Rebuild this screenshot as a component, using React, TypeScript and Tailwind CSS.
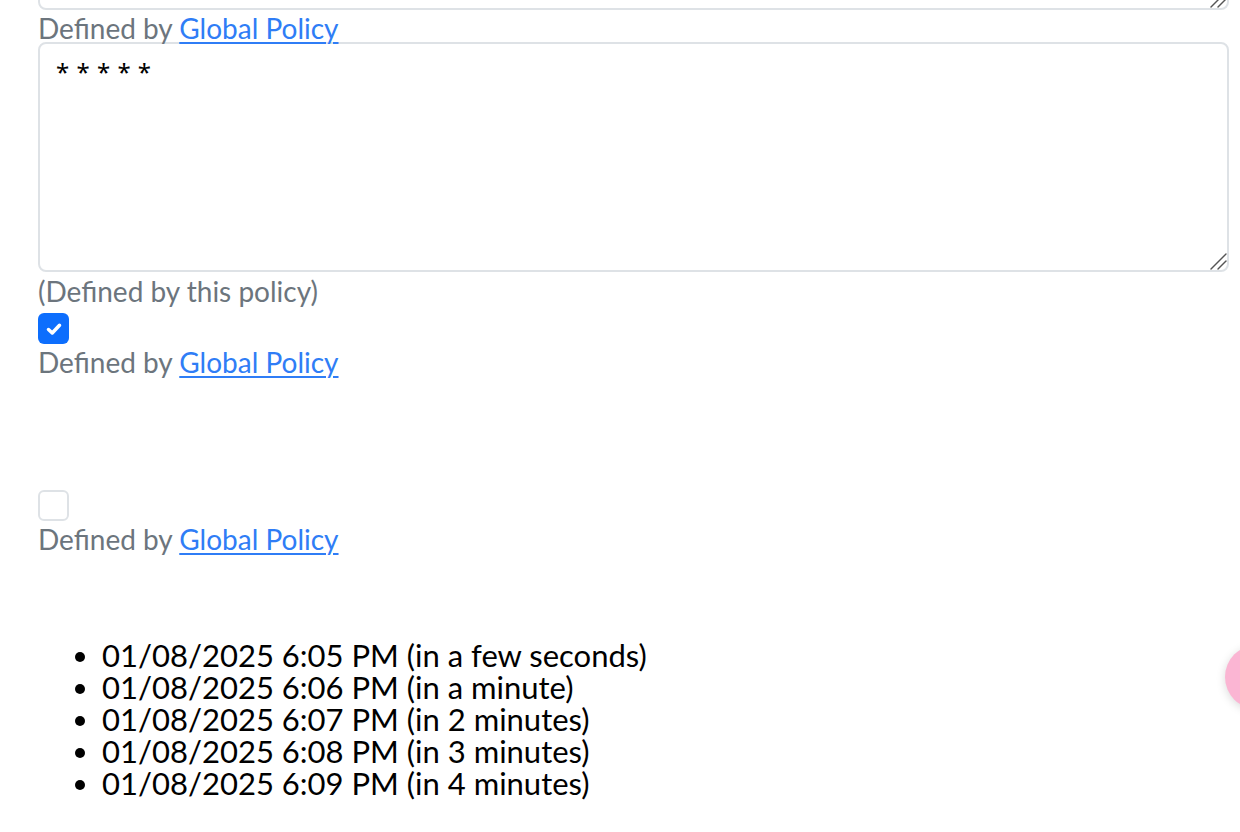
import React from "react";

const font = { fontFamily: "Lato, 'Noto Sans', sans-serif" };

function Defined() {
  return (
    <div className="text-[28px] leading-[32px] text-[#6c757d]">
      Defined by{" "}
      <a href="#" className="text-[#2f7df6] underline underline-offset-[3px] decoration-[2px]">
        Global Policy
      </a>
    </div>
  );
}

function Handle() {
  return (
    <svg className="absolute right-[2px] bottom-[2px] pointer-events-none" width="18" height="18" viewBox="0 0 18 18">
      <path d="M2 17 L17 2" stroke="#555" strokeWidth="1.4" strokeLinecap="round" />
      <path d="M9 17 L17 9" stroke="#555" strokeWidth="1.4" strokeLinecap="round" />
    </svg>
  );
}

export default function App() {
  return (
    <div className="relative w-[1240px] h-[832px] overflow-hidden bg-white" style={font}>
      <div className="pl-[38px] pr-[11px] flex flex-col">
        <div className="relative mt-[-110px]">
          <textarea
            readOnly
            className="block w-full h-[120px] rounded-[8px] border-2 border-[#dee2e6] bg-white outline-none resize-none"
            style={font}
          />
          <Handle />
        </div>
        <div className="relative z-10 mt-[2px] h-[30px]">
          <Defined />
        </div>
        <div className="relative">
          <textarea
            readOnly
            value={"* * * * *"}
            className="block w-full h-[230px] rounded-[8px] border-2 border-[#dee2e6] bg-white px-[16px] py-[12px] text-[24px] leading-[32px] tracking-[0.5px] text-black outline-none resize-none"
            style={{ fontFamily: "'Noto Sans', sans-serif" }}
          />
          <Handle />
        </div>
        <div className="mt-[3px] text-[28px] leading-[32px] text-[#6c757d]">(Defined by this policy)</div>
        <div className="mt-[6px] w-[31px] h-[31px] rounded-[6px] bg-[#0d6efd] flex items-center justify-center">
          <svg width="20" height="20" viewBox="0 0 16 16">
            <path d="M3.6 8.4 L6.6 11.2 L12.4 5" fill="none" stroke="white" strokeWidth="2.8" strokeLinecap="round" strokeLinejoin="round" />
          </svg>
        </div>
        <div className="mt-[2px]">
          <Defined />
        </div>
        <div className="mt-[112px] w-[31px] h-[31px] rounded-[6px] border-2 border-[#dee2e6] bg-white" />
        <div className="mt-[2px]">
          <Defined />
        </div>
        <ul className="mt-[84px] list-disc pl-[64px] text-[31px] leading-[32px] text-black">
          <li>01/08/2025 6:05 PM (in a few seconds)</li>
          <li>01/08/2025 6:06 PM (in a minute)</li>
          <li>01/08/2025 6:07 PM (in 2 minutes)</li>
          <li>01/08/2025 6:08 PM (in 3 minutes)</li>
          <li>01/08/2025 6:09 PM (in 4 minutes)</li>
        </ul>
      </div>
      <div className="absolute left-[1225px] top-[645px] w-[64px] h-[64px] rounded-full bg-[#fbb5d3] shadow-[0_2px_10px_rgba(0,0,0,0.15)]" />
    </div>
  );
}
